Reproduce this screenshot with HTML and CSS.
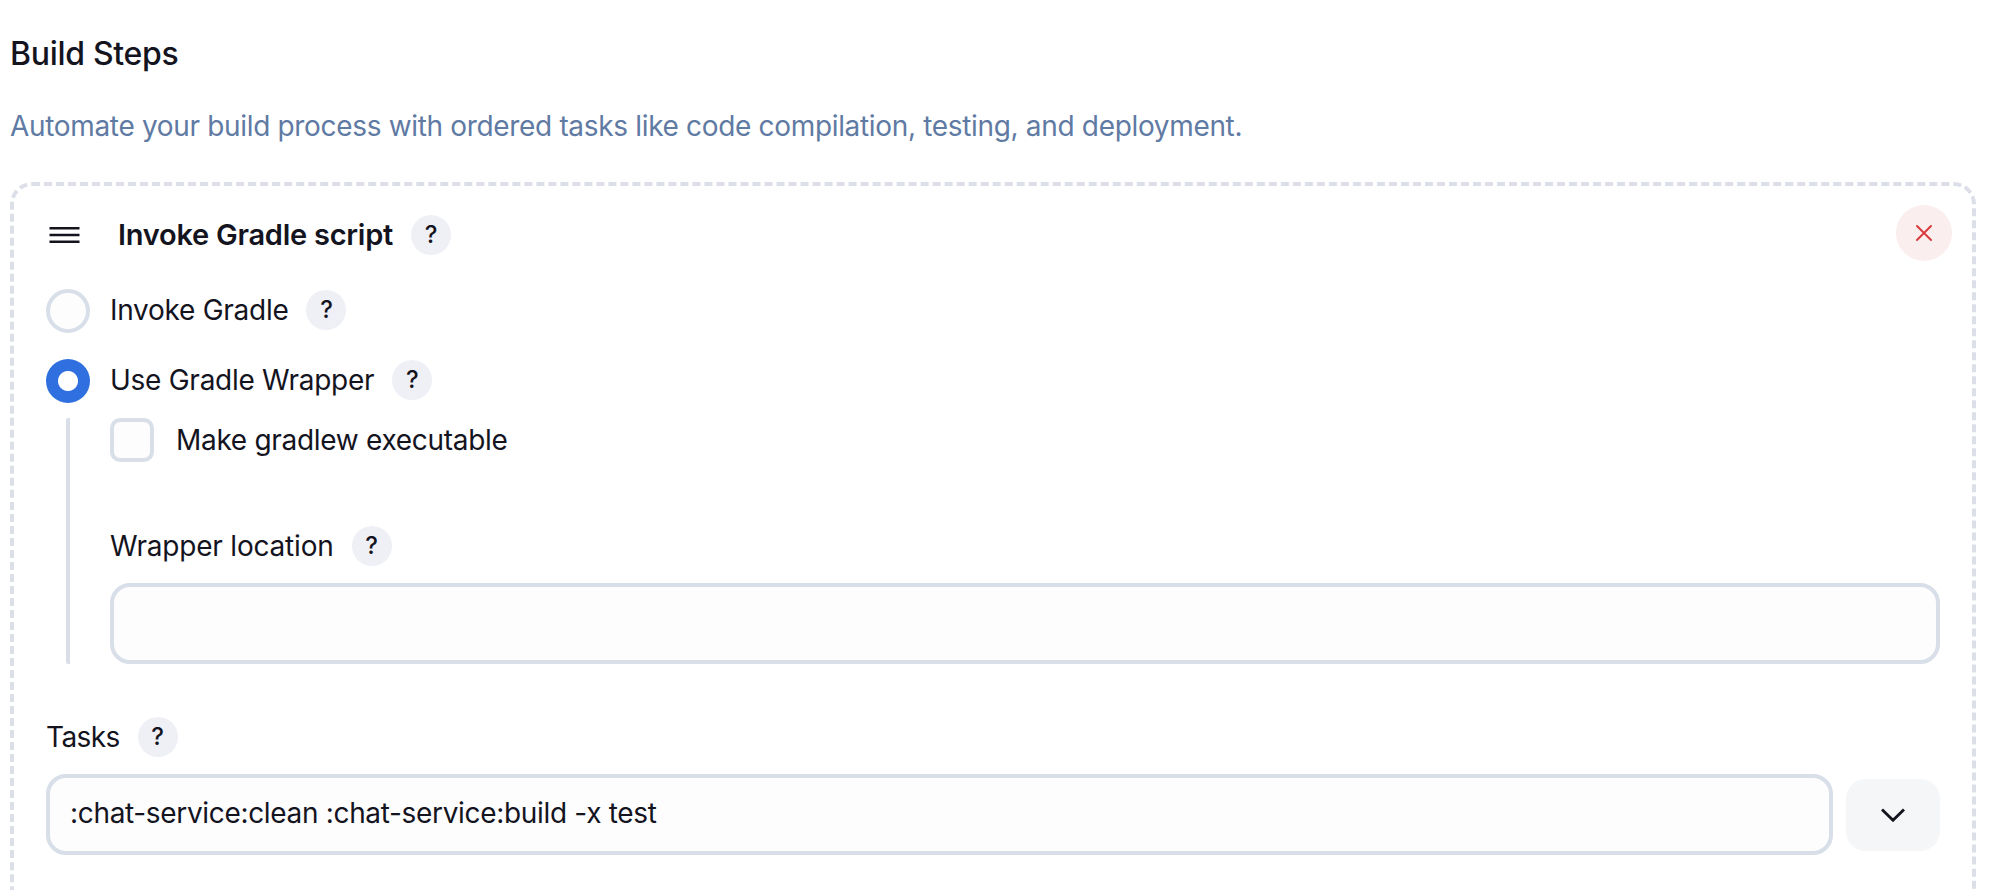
FILE: index.html
```html
<!DOCTYPE html>
<html lang="en">
<head>
<meta charset="utf-8">
<title>Build Steps</title>
<link rel="stylesheet" href="styles.css">
</head>
<body>
<main class="page">
  <h2 class="title">Build Steps</h2>
  <p class="desc">Automate your build process with ordered tasks like code compilation, testing, and deployment.</p>
  <section class="card">
    <button class="close" type="button" aria-label="Delete">
      <svg width="16" height="16" viewBox="0 0 16 16"><path d="M1 1L15 15M15 1L1 15" fill="none" stroke="#d8393b" stroke-width="1.9" stroke-linecap="round"/></svg>
    </button>
    <div class="card-head">
      <svg class="grip" width="31" height="16" viewBox="0 0 31 16"><path d="M0.5 1.2H30.5M0.5 8H30.5M0.5 14.8H30.5" fill="none" stroke="#14141f" stroke-width="2.5"/></svg>
      <span class="card-title">Invoke Gradle script</span>
      <span class="help">?</span>
    </div>
    <div class="radio-row first">
      <span class="radio"></span>
      <span class="label">Invoke Gradle</span>
      <span class="help">?</span>
    </div>
    <div class="radio-row second">
      <span class="radio on"></span>
      <span class="label">Use Gradle Wrapper</span>
      <span class="help">?</span>
    </div>
    <div class="nested">
      <div class="check-row">
        <span class="checkbox"></span>
        <span class="label">Make gradlew executable</span>
      </div>
      <div class="field-label wrapper-label">
        <span class="label">Wrapper location</span>
        <span class="help">?</span>
      </div>
      <input class="text-input" type="text">
    </div>
    <div class="field-label tasks-label">
      <span class="label">Tasks</span>
      <span class="help">?</span>
    </div>
    <div class="tasks-row">
      <input class="text-input" type="text" value=":chat-service:clean :chat-service:build -x test">
      <button class="expand" type="button" aria-label="Expand">
        <svg width="24" height="14" viewBox="0 0 24 14"><path d="M1 1.5L12 12.2L23 1.5" fill="none" stroke="#14141f" stroke-width="2.9"/></svg>
      </button>
    </div>
  </section>
</main>
</body>
</html>
```

FILE: styles.css
```css
* { box-sizing: border-box; }
html, body { margin: 0; height: 890px; overflow: hidden; background: #fff; }
body { font-family: Inter, "Liberation Sans", sans-serif; color: #14141f; font-size: 28px; letter-spacing: -0.3px; }
.page { padding: 0 28px 0 10px; }
.title { margin: 0; padding-top: 34px; font-size: 32px; font-weight: 500; line-height: 40px; }
.desc { margin: 32px 0 0; font-size: 28px; line-height: 40px; color: #5f7aa3; letter-spacing: -0.33px; }
.card { position: relative; margin-top: 36px; height: 900px; padding: 29px 32px; border: 4px dashed #dcdfe8; border-radius: 22px; }
.close { position: absolute; top: 19px; right: 20px; width: 56px; height: 56px; padding: 0; border: 0; border-radius: 50%; background: #faeeef; display: flex; align-items: center; justify-content: center; }
.card-head, .field-label, .check-row, .tasks-row { display: flex; align-items: center; }
.card-head { height: 40px; }
.grip { margin: 0 3px; flex: none; }
.card-title { margin-left: 35px; margin-top: -2px; font-size: 29px; font-weight: 600; letter-spacing: -0.25px; }
.help { flex: none; width: 40px; height: 40px; margin-left: 18px; border-radius: 50%; background: #eff0f5; font-size: 24px; font-weight: 500; line-height: 40px; text-align: center; letter-spacing: 0; }
.label { line-height: 40px; }
.radio-row { display: flex; align-items: flex-start; height: 44px; }
.radio-row .label, .radio-row .help { margin-top: 1px; }
.radio-row .label { letter-spacing: -0.27px; }
.first { margin-top: 34px; }
.second { margin-top: 26px; }
.radio { flex: none; width: 44px; height: 44px; margin-right: 20px; border: 4px solid #d8dfe8; border-radius: 50%; background: #fdfdfe; }
.radio.on { border: 0; background: radial-gradient(circle, #fff 9.5px, #2f6fdf 10.5px); }
.nested { margin: 15px 0 0 20px; padding-left: 40px; border-left: 4px solid #d8dfe8; border-radius: 2px; }
.check-row { height: 44px; }
.checkbox { flex: none; width: 44px; height: 44px; margin-right: 22px; border: 4px solid #d8dfe8; border-radius: 10px; background: #fdfdfe; }
.wrapper-label { margin-top: 64px; height: 40px; }
.wrapper-label .label { letter-spacing: -0.2px; }
.tasks-label .label { letter-spacing: -0.6px; }
.text-input { display: block; width: 100%; height: 81px; padding: 0 20px 3px; border: 4px solid #d8dfe8; border-radius: 20px; background: #fdfdfe; color: #14141f; font: inherit; letter-spacing: -0.33px; outline: none; }
.nested .text-input { margin-top: 17px; }
.tasks-label { margin-top: 53px; height: 40px; }
.tasks-row { margin-top: 17px; gap: 13px; }
.expand { flex: none; width: 94px; height: 72px; padding: 0; border: 0; border-radius: 20px; background: #f5f6f8; display: flex; align-items: center; justify-content: center; }
```
